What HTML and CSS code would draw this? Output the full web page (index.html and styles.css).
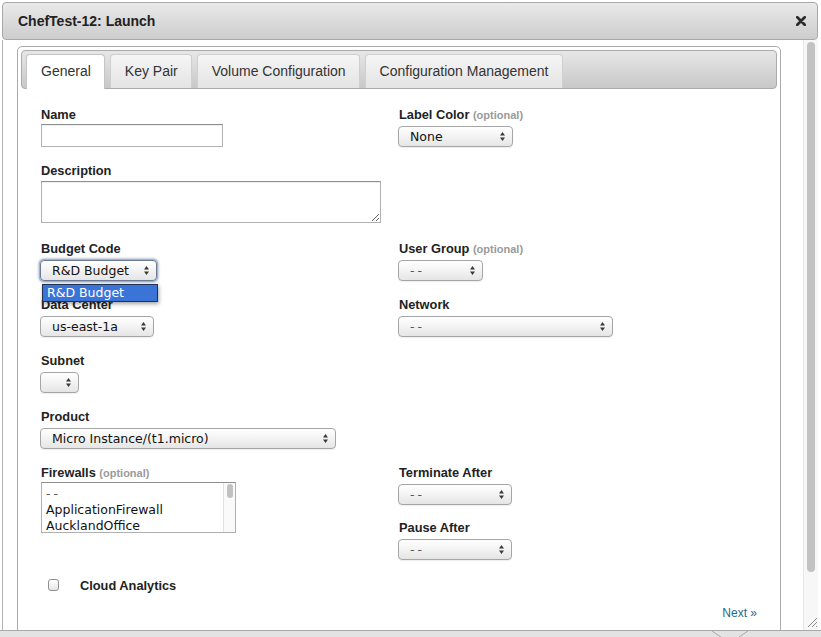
FILE: index.html
```html
<!DOCTYPE html>
<html>
<head>
<meta charset="utf-8">
<title>ChefTest-12: Launch</title>
<link rel="stylesheet" href="styles.css">
</head>
<body>
<div class="window">
  <div class="titlebar">
    <span class="title">ChefTest-12: Launch</span>
    <svg class="close" width="10" height="10" viewBox="0 0 10 10"><path d="M1.3 1.3L8.7 8.7M8.7 1.3L1.3 8.7" stroke="#2b2b2b" stroke-width="2.7" stroke-linecap="round"/></svg>
  </div>
  <div class="main">
    <div class="scrollarea">
      <div class="panel">
        <div class="tabbar">
          <div class="tab active">General</div>
          <div class="tab">Key Pair</div>
          <div class="tab">Volume Configuration</div>
          <div class="tab">Configuration Management</div>
        </div>
        <div class="form">
          <div class="columns">
            <div class="col left">
              <div class="field">
                <div class="lbl">Name</div>
                <input class="text name-input" type="text">
              </div>
              <div class="field tall">
                <div class="lbl">Description</div>
                <textarea class="desc"></textarea>
              </div>
              <div class="field popup-host">
                <div class="lbl">Budget Code</div>
                <div class="select focused w-budget"><span>R&amp;D Budget</span><svg class="arr" width="5" height="9" viewBox="0 0 5 9"><path d="M0 3.5L2.5 0L5 3.5Z M0 5.5L5 5.5L2.5 9Z" fill="#3a3a3a"/></svg></div>
                <div class="popup">R&amp;D Budget</div>
              </div>
              <div class="field">
                <div class="lbl">Data Center</div>
                <div class="select w-dc"><span>us-east-1a</span><svg class="arr" width="5" height="9" viewBox="0 0 5 9"><path d="M0 3.5L2.5 0L5 3.5Z M0 5.5L5 5.5L2.5 9Z" fill="#3a3a3a"/></svg></div>
              </div>
              <div class="field">
                <div class="lbl">Subnet</div>
                <div class="select w-subnet"><span></span><svg class="arr" width="5" height="9" viewBox="0 0 5 9"><path d="M0 3.5L2.5 0L5 3.5Z M0 5.5L5 5.5L2.5 9Z" fill="#3a3a3a"/></svg></div>
              </div>
              <div class="field">
                <div class="lbl">Product</div>
                <div class="select w-product"><span>Micro Instance/(t1.micro)</span><svg class="arr" width="5" height="9" viewBox="0 0 5 9"><path d="M0 3.5L2.5 0L5 3.5Z M0 5.5L5 5.5L2.5 9Z" fill="#3a3a3a"/></svg></div>
              </div>
              <div class="field auto">
                <div class="lbl">Firewalls <span class="opt">(optional)</span></div>
                <div class="listbox">
                  <div class="items">
                    <div class="item dash">--</div>
                    <div class="item">ApplicationFirewall</div>
                    <div class="item">AucklandOffice</div>
                  </div>
                  <div class="lb-track"><div class="lb-thumb"></div></div>
                </div>
              </div>
            </div>
            <div class="col right">
              <div class="field">
                <div class="lbl">Label Color <span class="opt">(optional)</span></div>
                <div class="select w-color"><span>None</span><svg class="arr" width="5" height="9" viewBox="0 0 5 9"><path d="M0 3.5L2.5 0L5 3.5Z M0 5.5L5 5.5L2.5 9Z" fill="#3a3a3a"/></svg></div>
              </div>
              <div class="spacer s78"></div>
              <div class="field">
                <div class="lbl">User Group <span class="opt">(optional)</span></div>
                <div class="select w-ug"><span class="dash">--</span><svg class="arr" width="5" height="9" viewBox="0 0 5 9"><path d="M0 3.5L2.5 0L5 3.5Z M0 5.5L5 5.5L2.5 9Z" fill="#3a3a3a"/></svg></div>
              </div>
              <div class="field">
                <div class="lbl">Network</div>
                <div class="select w-net"><span class="dash">--</span><svg class="arr" width="5" height="9" viewBox="0 0 5 9"><path d="M0 3.5L2.5 0L5 3.5Z M0 5.5L5 5.5L2.5 9Z" fill="#3a3a3a"/></svg></div>
              </div>
              <div class="spacer s112"></div>
              <div class="field short">
                <div class="lbl">Terminate After</div>
                <div class="select w-time"><span class="dash">--</span><svg class="arr" width="5" height="9" viewBox="0 0 5 9"><path d="M0 3.5L2.5 0L5 3.5Z M0 5.5L5 5.5L2.5 9Z" fill="#3a3a3a"/></svg></div>
              </div>
              <div class="field auto">
                <div class="lbl">Pause After</div>
                <div class="select w-time"><span class="dash">--</span><svg class="arr" width="5" height="9" viewBox="0 0 5 9"><path d="M0 3.5L2.5 0L5 3.5Z M0 5.5L5 5.5L2.5 9Z" fill="#3a3a3a"/></svg></div>
              </div>
            </div>
          </div>
          <div class="check-row">
            <div class="checkbox"></div>
            <span class="check-label">Cloud Analytics</span>
          </div>
          <div class="next-row"><a class="next" href="#">Next »</a></div>
        </div>
      </div>
    </div>
    <div class="vscroll">
      <div class="thumb"></div>
      <svg class="grip" width="12" height="12" viewBox="0 0 12 12"><path d="M11 2L2 11M11 6L6 11M11 10L10 11" stroke="#8a8a8a" stroke-width="1"/></svg>
    </div>
  </div>
  <div class="bottombar">
    <svg class="notch" width="48" height="6" viewBox="0 0 48 6"><path d="M0 0L9 6M27 6L36 0" stroke="#a9a9a9" stroke-width="1" fill="none"/></svg>
  </div>
</div>
</body>
</html>
```

FILE: styles.css
```css
body {
  margin: 0;
  width: 821px;
  height: 637px;
  overflow: hidden;
  background: #fff;
  font-family: "Liberation Sans", Arial, sans-serif;
  color: #222;
}

.window {
  display: flex;
  flex-direction: column;
  height: 637px;
}

.titlebar {
  box-sizing: border-box;
  flex-shrink: 0;
  height: 38px;
  margin: 2px 3px 0 2px;
  border: 1px solid #a8a8a8;
  border-radius: 4px;
  background: linear-gradient(#e9e9e9, #cdcdcd);
  display: flex;
  align-items: center;
  justify-content: space-between;
  padding: 0 11px 0 15px;
}

.title {
  font-weight: bold;
  font-size: 14px;
  color: #222;
}

.close {
  display: block;
}

.main {
  flex: 1;
  min-height: 0;
  display: flex;
  margin-left: 2px;
  border-left: 1px solid #b4b4b4;
}

.scrollarea {
  box-sizing: border-box;
  width: 800px;
  padding: 6px 0 0 14px;
  overflow: hidden;
}

.panel {
  box-sizing: border-box;
  width: 764px;
  height: 640px;
  border: 1px solid #ababab;
  border-radius: 5px 5px 0 0;
  padding: 3px;
}

.tabbar {
  box-sizing: border-box;
  height: 39px;
  border: 1px solid #ababab;
  border-radius: 4px;
  background: linear-gradient(#e7e7e7, #c8c8c8);
  display: flex;
  align-items: flex-end;
  gap: 5px;
  padding-left: 4px;
}

.tab {
  box-sizing: border-box;
  height: 34px;
  padding: 0 13px 0 14px;
  border: 1px solid #cfcfcf;
  border-bottom: none;
  border-radius: 4px 4px 0 0;
  background: linear-gradient(#f5f5f5, #e4e4e4);
  font-size: 14px;
  line-height: 33px;
  color: #333;
}

.tab.active {
  height: 35px;
  margin-bottom: -1px;
  background: #fff;
  border-color: #c4c4c4;
}

.form {
  padding: 19px 20px 0 19px;
}

.columns {
  display: flex;
}

.col.left {
  width: 358px;
}

.col {
  display: flex;
  flex-direction: column;
}

.field {
  height: 56px;
  display: flex;
  flex-direction: column;
  align-items: flex-start;
}

.field.tall {
  height: 78px;
}

.field.short {
  height: 55px;
}

.field.auto {
  height: auto;
}

.spacer.s78 { height: 78px; }
.spacer.s112 { height: 112px; }

.popup-host {
  position: relative;
}

.lbl {
  font-size: 12.8px;
  font-weight: bold;
  line-height: 14px;
  margin-bottom: 3px;
  padding-left: 1px;
  color: #222;
  white-space: nowrap;
}

.opt {
  font-size: 11px;
  color: #9a9a9a;
}

.text {
  box-sizing: border-box;
  margin: -1px 0 0 1px;
  border: 1px solid #b2b2b2;
  border-top-color: #8e8e8e;
  box-shadow: inset 0 1px 1px rgba(0, 0, 0, 0.07);
  background: #fff;
  padding: 0 4px;
  outline: none;
}

.name-input {
  width: 182px;
  height: 23px;
}

.desc {
  box-sizing: border-box;
  width: 340px;
  height: 42px;
  margin: 0 0 0 1px;
  border: 1px solid #b2b2b2;
  border-top-color: #8e8e8e;
  box-shadow: inset 0 1px 1px rgba(0, 0, 0, 0.07);
  outline: none;
  resize: both;
}

.select {
  box-sizing: border-box;
  height: 21px;
  margin-top: 1px;
  display: flex;
  align-items: center;
  justify-content: space-between;
  border: 1px solid #a6a6a6;
  border-radius: 4px;
  background: linear-gradient(#ffffff, #f3f3f3 50%, #e5e5e5);
  box-shadow: 0 1px 1px rgba(0, 0, 0, 0.07);
  padding: 0 7px 0 11px;
  font-family: "DejaVu Sans", sans-serif;
  font-size: 12.5px;
  color: #111;
  white-space: nowrap;
}

.select.focused {
  border-color: #6c7c98;
  box-shadow: 0 0 0 1px #a3b2c9, 0 0 3px 1px #8696b2;
}

.arr {
  display: block;
  flex-shrink: 0;
}

.dash {
  letter-spacing: 3px;
  color: #555;
}

.w-budget { width: 117px; }
.w-dc { width: 114px; }
.w-subnet { width: 39px; }
.w-product { width: 296px; }
.w-color { width: 115px; }
.w-ug { width: 85px; }
.w-net { width: 215px; }
.w-time { width: 114px; }

.popup {
  position: absolute;
  left: 2px;
  top: 42px;
  z-index: 2;
  box-sizing: border-box;
  width: 116px;
  height: 18px;
  background: #3a74d6;
  border: 1px solid #223150;
  box-shadow: 1px 2px 4px rgba(0, 0, 0, 0.35);
  color: #fff;
  font-family: "DejaVu Sans", sans-serif;
  font-size: 12.5px;
  line-height: 16px;
  padding-left: 4px;
}

.listbox {
  box-sizing: border-box;
  width: 195px;
  height: 51px;
  margin: -1px 0 0 1px;
  border: 1px solid #b0b0b0;
  border-top-color: #8e8e8e;
  display: flex;
  background: #fff;
  overflow: hidden;
}

.items {
  flex: 1;
  padding: 3px 0 0 4px;
  font-family: "DejaVu Sans", sans-serif;
  font-size: 12.5px;
  color: #111;
}

.item {
  height: 16px;
  line-height: 16px;
  white-space: nowrap;
}

.lb-track {
  width: 11px;
  border-left: 1px solid #e2e2e2;
  background: #fafafa;
  display: flex;
  justify-content: center;
}

.lb-thumb {
  width: 6px;
  height: 14px;
  margin-top: 1px;
  border-radius: 3px;
  background: #c1c1c1;
}

.check-row {
  display: flex;
  align-items: center;
  height: 16px;
  margin-top: 17px;
}

.checkbox {
  box-sizing: border-box;
  width: 11px;
  height: 12px;
  margin-left: 8px;
  border: 1px solid #8f8f8f;
  border-radius: 3px;
  background: linear-gradient(#ffffff, #e6e6e6);
}

.check-label {
  margin-left: 21px;
  font-size: 12.8px;
  font-weight: bold;
  color: #222;
}

.next-row {
  display: flex;
  justify-content: flex-end;
  height: 16px;
  line-height: 16px;
  margin-top: 12px;
}

.next {
  font-size: 12px;
  color: #1e6a8c;
  text-decoration: none;
}

.vscroll {
  box-sizing: border-box;
  width: 15px;
  border-left: 1px solid #e6e6e6;
  background: #f7f7f7;
  display: flex;
  flex-direction: column;
  align-items: center;
}

.thumb {
  width: 8px;
  height: 530px;
  margin-top: 2px;
  border-radius: 4px;
  background: #c2c2c2;
}

.grip {
  display: block;
  margin-top: auto;
  margin-bottom: 2px;
  align-self: flex-end;
}

.bottombar {
  box-sizing: border-box;
  flex-shrink: 0;
  height: 7px;
  border-top: 1px solid #a9a9a9;
  background: #e3e3e3;
  display: flex;
  padding-left: 712px;
}

.notch {
  display: block;
}
```
